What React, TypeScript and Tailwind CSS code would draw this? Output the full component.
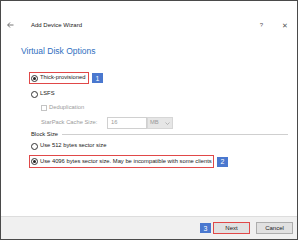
import React from 'react'

function Radio({ checked, disabled }: { checked?: boolean; disabled?: boolean }) {
  return (
    <span
      className={`inline-flex items-center justify-center w-[7px] h-[7px] rounded-full border bg-white shrink-0 ${
        disabled ? 'border-[#bbbbbb]' : 'border-[#333333]'
      }`}
    >
      {checked && <span className="w-[3px] h-[3px] rounded-full bg-[#222222]" />}
    </span>
  )
}

function Badge({ n }: { n: string }) {
  return (
    <span className="inline-flex items-center justify-center w-[11px] h-[10px] bg-[#4a78cf] text-white text-[7px] leading-none">
      {n}
    </span>
  )
}

export default function App() {
  return (
    <div
      className="w-[298px] h-[240px] border border-[#4a4a4a] bg-white flex flex-col text-[#1a1a1a]"
      style={{ fontFamily: '"Liberation Sans", Arial, sans-serif' }}
    >
      {/* title bar */}
      <div className="mt-[18px] h-[12px] flex items-center pl-[6px] pr-[9px] text-[6px]">
        <svg width="7" height="6" viewBox="0 0 7 6" className="shrink-0">
          <path d="M3 0.5 L0.7 3 L3 5.5 M0.7 3 H6.5" stroke="#666" strokeWidth="0.9" fill="none" />
        </svg>
        <span className="ml-[17px]">Add Device Wizard</span>
        <span className="ml-auto text-[#555555] text-[6px]">?</span>
        <span className="ml-[19px] text-[#555555] text-[7px] leading-none">✕</span>
      </div>

      {/* heading */}
      <div className="mt-[14px] pl-[20px] h-[12px] flex items-center text-[8.5px] text-[#2f6fc0]">
        Virtual Disk Options
      </div>

      <div className="pl-[28px] text-[5.8px] leading-none whitespace-nowrap">
        <div className="mt-[15px] flex items-center gap-[3px]">
          <div className="h-[12px] w-[60px] border border-[#e04848] flex items-center gap-[2px] pl-[1px]">
            <Radio checked />
            <span>Thick-provisioned</span>
          </div>
          <Badge n="1" />
        </div>

        <div className="mt-[5px] h-[10px] flex items-center gap-[2px] pl-[2px]">
          <Radio />
          <span>LSFS</span>
        </div>

        <div className="mt-[4px] h-[10px] flex items-center gap-[2px] pl-[12px] text-[#9a9a9a]">
          <span className="w-[6px] h-[6px] border border-[#c4c4c4] bg-white" />
          <span>Deduplication</span>
        </div>

        <div className="mt-[4px] h-[12px] flex items-center pl-[12px] text-[#9a9a9a]">
          <span className="w-[66px]">StarPack Cache Size:</span>
          <div className="w-[40px] h-[12px] border border-[#d0d0d0] flex items-center pl-[3px]">16</div>
          <div className="w-[26px] h-[12px] bg-[#e6e6e6] border border-[#d6d6d6] flex items-center justify-between px-[2px]">
            <span>MB</span>
            <svg width="5" height="3" viewBox="0 0 5 3">
              <path d="M0.5 0.5 L2.5 2.5 L4.5 0.5" stroke="#a0a0a0" strokeWidth="0.7" fill="none" />
            </svg>
          </div>
        </div>

        <div className="mt-[1px] h-[9px] flex items-center pl-[2px] pr-[9px]">
          <span>Block Size</span>
          <span className="ml-[4px] flex-1 h-px bg-[#cfcfcf]" />
        </div>

        <div className="mt-[2px] h-[10px] flex items-center gap-[2px] pl-[2px]">
          <Radio />
          <span>Use 512 bytes sector size</span>
        </div>

        <div className="mt-[4px] flex items-center gap-[3px]">
          <div className="h-[13px] w-[185px] shrink-0 border border-[#e04848] flex items-center gap-[2px] pl-[1px] overflow-hidden">
            <Radio checked />
            <span>Use 4096 bytes sector size. May be incompatible with some clients</span>
          </div>
          <Badge n="2" />
        </div>
      </div>

      {/* footer */}
      <div className="mt-auto h-[23px] bg-[#f0f0f0] border-t border-[#dddddd] flex items-center justify-end pr-[4px] text-[6px]">
        <Badge n="3" />
        <div className="ml-[2px] w-[37px] h-[12px] border border-[#e04848] bg-[#e1e1e1] flex items-center justify-center">
          Next
        </div>
        <div className="ml-[6px] w-[37px] h-[12px] border border-[#adadad] bg-[#e1e1e1] flex items-center justify-center">
          Cancel
        </div>
      </div>
    </div>
  )
}
